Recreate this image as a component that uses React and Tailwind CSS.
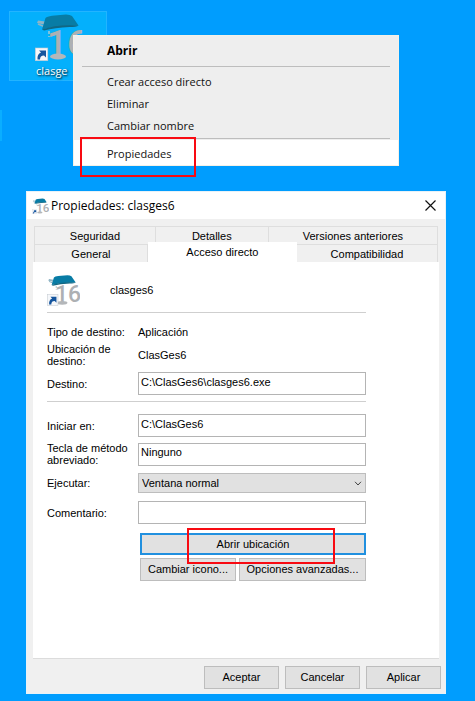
import React, { useState } from 'react';

const MENU_ITEM = 'block w-full pl-[33px] text-left text-[11px] leading-[22px] text-[#111]';
const FIELD = 'h-[23px] w-full border border-[#b4b4b4] bg-white px-[2px] pb-1 text-[11px] text-black outline-none';
const BUTTON = 'h-[23px] border border-[#bdbdbd] bg-[#e1e1e1] text-center text-[11px] text-black';
const TAB = 'h-[18px] border-t border-r border-[#dedede] bg-[#f0f0f0] text-center leading-[18px]';

function LampIcon({ className, arrow = 1 }) {
  return (
    <svg viewBox="0 0 50 48" className={className} aria-hidden="true">
      <text x="12" y="42" fill="#adb0b3" fontFamily="Roboto, sans-serif" fontWeight="500" fontSize="35">16</text>
      <ellipse cx="23" cy="43.500" rx="8" ry="3" fill="#b4b7ba" />
      <path d="M9 11.500 2 10l1-2.500 7 1z" fill="#8fb4c4" />
      <path d="M3 11l6 2.500" stroke="#8fb4c4" strokeWidth="1.500" />
      <path d="M7 16.500 10.500 5Q12 3.500 17 2.800L31 1.500q4 0 6 1.500l6.500 9.500-9 .5Q20 13 7 16.500z" fill="#087ca5" />
      <path d="M7 16.500Q22 11 43.500 12.500q-2 1.500-9 1.500Q20 14.500 9 17.500z" fill="#126783" />
      <path d="M14 18v3m0 2v1" stroke="#a8c8d4" strokeWidth="1.500" />
      <g transform={`translate(0 48) scale(${arrow}) translate(0 -48)`}>
        <rect x=".3" y="35" width="12.500" height="12.700" fill="#f5f7fa" stroke="#c2c8cf" strokeWidth=".6" />
        <path d="M2.500 46.500q-.5-5.500 3.500-7L4 37.500h7v7l-2-2q-4 0-4 4z" fill="#15559e" />
      </g>
    </svg>
  );
}

function ContextMenu() {
  return (
    <div className="relative ml-[73px] mr-[76px] border border-[#f4f1e8] bg-[#eeeeee] font-['Open_Sans',sans-serif]" role="menu">
      <button type="button" role="menuitem" className="block h-[30px] w-full pl-[33px] text-left text-[12px] font-bold leading-[28px] text-black">
        Abrir
      </button>
      <hr className="mx-2 mb-[4px] border-[#bdbdbd]" />
      <button type="button" role="menuitem" className={MENU_ITEM}>Crear acceso directo</button>
      <button type="button" role="menuitem" className={MENU_ITEM}>Eliminar</button>
      <button type="button" role="menuitem" className={MENU_ITEM}>Cambiar nombre</button>
      <hr className="mx-2 mb-px mt-px border-[#bdbdbd]" />
      <div className="relative">
        <button type="button" role="menuitem" className="block h-[25px] w-full bg-white pl-[33px] text-left text-[11px] leading-[28px] text-[#111]">
          Propiedades
        </button>
        <span className="pointer-events-none absolute -top-[3px] left-[6px] h-[40px] w-[116px] border-2 border-[#f80a12]" />
      </div>
    </div>
  );
}

function Tabs() {
  return (
    <div role="tablist" className="mx-px">
      <div className="flex border-l border-[#dedede]">
        <button type="button" role="tab" className={`${TAB} w-[30%]`}>Seguridad</button>
        <button type="button" role="tab" className={`${TAB} w-[28%]`}>Detalles</button>
        <button type="button" role="tab" className={`${TAB} flex-1`}>Versiones anteriores</button>
      </div>
      <div className="flex items-end border-l border-[#dedede]">
        <button type="button" role="tab" className={`${TAB} w-[28%]`}>General</button>
        <button type="button" role="tab" aria-selected="true" className="-mt-[2px] h-[20px] w-[37%] bg-white text-center leading-[20px]">
          Acceso directo
        </button>
        <button type="button" role="tab" className={`${TAB} flex-1`}>Compatibilidad</button>
      </div>
    </div>
  );
}

function Row({ label, htmlFor, className, children }) {
  return (
    <div className={`grid grid-cols-[91px_1fr] items-center ${className}`}>
      <label htmlFor={htmlFor} className="leading-[12px]">{label}</label>
      {children}
    </div>
  );
}

function ShortcutForm() {
  const [target, setTarget] = useState('C:\\ClasGes6\\clasges6.exe');
  const [startIn, setStartIn] = useState('C:\\ClasGes6');
  const [hotkey, setHotkey] = useState('Ninguno');
  const [comment, setComment] = useState('');

  return (
    <div className="mx-[6px] h-[397px] border-b border-[#dcdcdc] bg-white pl-[14px] pr-[73px] pt-[12px]">
      <div className="flex h-[39px] items-start border-b border-[#cfcfcf]">
        <LampIcon className="h-8 w-[33px]" arrow={1.3} />
        <span className="ml-[30px] mt-[9px] leading-[14px]">clasges6</span>
      </div>

      <Row label="Tipo de destino:" className="mt-[11px] h-[14px]">
        <span>Aplicación</span>
      </Row>
      <Row label="Ubicación de destino:" className="mt-[5px] h-[24px]">
        <span>ClasGes6</span>
      </Row>
      <Row label="Destino:" htmlFor="target" className="mt-[5px]">
        <input id="target" value={target} onChange={(e) => setTarget(e.target.value)} className={FIELD} />
      </Row>

      <hr className="mt-[6px] border-[#cfcfcf]" />

      <Row label="Iniciar en:" htmlFor="start" className="mt-[12px]">
        <input id="start" value={startIn} onChange={(e) => setStartIn(e.target.value)} className={FIELD} />
      </Row>
      <Row label="Tecla de método abreviado:" htmlFor="hotkey" className="mt-[5px]">
        <input id="hotkey" value={hotkey} onChange={(e) => setHotkey(e.target.value)} className={FIELD} />
      </Row>
      <Row label="Ejecutar:" htmlFor="run" className="mt-[7px]">
        <div className="relative">
          <select id="run" className="block h-[20px] w-full appearance-none border border-[#bdbdbd] bg-[#e1e1e1] px-[3px] text-[11px] text-black">
            <option>Ventana normal</option>
            <option>Minimizada</option>
            <option>Maximizada</option>
          </select>
          <svg viewBox="0 0 8 5" className="pointer-events-none absolute right-1 top-2 h-[5px] w-2" aria-hidden="true">
            <path d="M1 .8 4 4 7 .8" fill="none" stroke="#444" />
          </svg>
        </div>
      </Row>
      <Row label="Comentario:" htmlFor="comment" className="mt-[8px]">
        <input id="comment" value={comment} onChange={(e) => setComment(e.target.value)} className={FIELD} />
      </Row>

      <div className="ml-[93px] mt-[9px] flex flex-col gap-[3px]">
        <div className="relative">
          <button type="button" className="block h-[22px] w-full border-2 border-[#2190df] bg-[#e1e1e1] text-center">
            Abrir ubicación
          </button>
          {/* highlight around the button label */}
          <span className="pointer-events-none absolute -top-[5px] left-[47px] z-10 h-[36px] w-[148px] border-2 border-[#f80a12]" />
        </div>
        <div className="flex gap-[3px]">
          <button type="button" className={`${BUTTON} w-[96px]`}>Cambiar icono...</button>
          <button type="button" className={`${BUTTON} flex-1`}>Opciones avanzadas...</button>
        </div>
      </div>
    </div>
  );
}

function PropertiesDialog() {
  return (
    <section
      role="dialog"
      aria-labelledby="dialog-title"
      className="ml-[26px] mr-[29px] mt-[25px] border border-[#e8f2f8] bg-[#f0f0f0] pb-[4px] text-[11px] text-black"
    >
      <header className="flex h-[27px] items-center bg-white pl-[5px] pr-[9px]">
        <LampIcon className="h-4 w-[17px]" arrow={1.1} />
        <h1 id="dialog-title" className="ml-[2px] flex-1 font-['Open_Sans',sans-serif] text-[12px]">Propiedades: clasges6</h1>
        <button type="button" aria-label="Cerrar">
          <svg viewBox="0 0 11 11" className="h-[11px] w-[11px]">
            <path d="M.5.5l10 10M10.500.5l-10 10" stroke="#111" strokeWidth="1.200" />
          </svg>
        </button>
      </header>
      <div className="mx-[6px] mt-[7px]">
        <Tabs />
      </div>
      <ShortcutForm />
      <footer className="mt-[7px] flex justify-end gap-[6px] pr-1">
        <button type="button" className={`${BUTTON} w-[75px]`}>Aceptar</button>
        <button type="button" className={`${BUTTON} w-[75px]`}>Cancelar</button>
        <button type="button" className={`${BUTTON} w-[75px]`}>Aplicar</button>
      </footer>
    </section>
  );
}

function App() {
  return (
    <main className="relative min-h-screen bg-[#009dfe] pt-[35px] font-['Liberation_Sans',Arial,sans-serif]">
      {/* Desktop shortcut, partly covered by the menu */}
      <div className="absolute left-[9px] top-[11px] h-[70px] w-[98px] border border-[#22b4ff] bg-[#04b0fc]">
        <LampIcon className="ml-[25px] mt-px h-12 w-[50px]" />
        <span className="ml-[26px] block font-['Open_Sans',sans-serif] text-[11px] leading-[20px] text-white text-shadow-[1px_1px_2px_#000]">
          clasge
        </span>
      </div>
      <div className="absolute left-0 top-[110px] h-[31px] w-[2px] bg-[#0aaeff]" />
      <ContextMenu />
      <PropertiesDialog />
    </main>
  );
}

export default App;
